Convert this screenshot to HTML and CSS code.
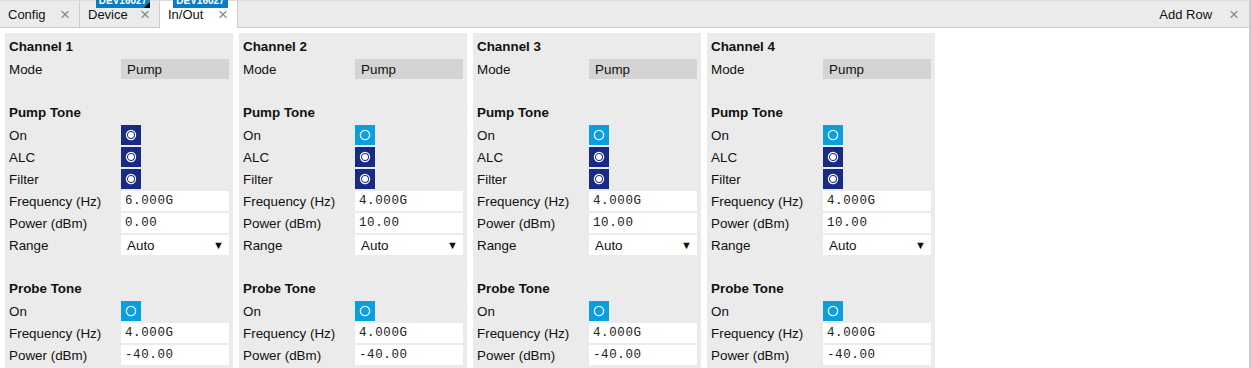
FILE: index.html
```html
<!DOCTYPE html>
<html>
<head>
    <title>In/Out</title>
    <link rel="stylesheet" href="styles.css">
</head>
<body>
    <div class="tabbar">
        <div class="tab">Config <span class="close">&times;</span></div>
        <div class="tab">Device <span class="close">&times;</span><span class="badge flagged">DEV16027</span></div>
        <div class="tab active">In/Out <span class="close">&times;</span><span class="badge">DEV16027</span></div>
        <div class="tab-fill"></div>
        <div class="tab-action">Add Row <span class="close">&times;</span></div>
    </div>

    <div id="channels" class="channels"></div>

    <script>
        const channels = [
            { name: 'Channel 1', pumpOn: true,  alc: true, filter: true, freq: '6.000G', power: '0.00' },
            { name: 'Channel 2', pumpOn: false, alc: true, filter: true, freq: '4.000G', power: '10.00' },
            { name: 'Channel 3', pumpOn: false, alc: true, filter: true, freq: '4.000G', power: '10.00' },
            { name: 'Channel 4', pumpOn: false, alc: true, filter: true, freq: '4.000G', power: '10.00' }
        ];

        const dotOn = '<svg width="12" height="12" viewBox="0 0 12 12"><circle cx="6" cy="6" r="4.6" fill="none" stroke="#fff" stroke-width="1.2"/><circle cx="6" cy="6" r="3" fill="#fff"/></svg>';
        const dotOff = '<svg width="12" height="12" viewBox="0 0 12 12"><circle cx="6" cy="6" r="4.6" fill="none" stroke="#fff" stroke-width="1.3"/></svg>';

        function row(label, value) {
            return `<div class="row"><span class="label">${label}</span>${value}</div>`;
        }

        function toggle(on) {
            return `<span class="toggle ${on ? 'on' : 'off'}">${on ? dotOn : dotOff}</span>`;
        }

        function field(text) {
            return `<span class="field">${text}</span>`;
        }

        const container = document.getElementById('channels');
        channels.forEach(ch => {
            const panel = document.createElement('div');
            panel.className = 'panel';
            panel.innerHTML =
                `<div class="row title">${ch.name}</div>` +
                row('Mode', '<span class="readonly">Pump</span>') +
                '<div class="row"></div>' +
                '<div class="row title">Pump Tone</div>' +
                row('On', toggle(ch.pumpOn)) +
                row('ALC', toggle(ch.alc)) +
                row('Filter', toggle(ch.filter)) +
                row('Frequency (Hz)', field(ch.freq)) +
                row('Power (dBm)', field(ch.power)) +
                row('Range', '<span class="select">Auto<span class="arrow">&#9660;</span></span>') +
                '<div class="row"></div>' +
                '<div class="row title">Probe Tone</div>' +
                row('On', toggle(false)) +
                row('Frequency (Hz)', field('4.000G')) +
                row('Power (dBm)', field('-40.00'));
            container.appendChild(panel);
        });
    </script>
</body>
</html>
```

FILE: styles.css
```css
:root {
    --bar: #ebebeb;
    --border: #cccccc;
    --panel: #ebebeb;
    --readonly: #d4d4d4;
    --navy: #182a84;
    --sky: #0a9fe0;
    --badge: #0a7cc4;
    --text: #111111;
}

* {
    margin: 0;
    padding: 0;
    box-sizing: border-box;
}

html, body {
    height: 100%;
    overflow: hidden;
}

body {
    font-family: "Liberation Sans", Arial, sans-serif;
    font-size: 13px;
    color: var(--text);
    background: #ffffff;
    border-right: 2px solid var(--border);
}

.tabbar {
    display: flex;
    height: 28px;
    background: var(--bar);
    border-top: 1px solid #dddddd;
    border-bottom: 1px solid var(--border);
}

.tab {
    position: relative;
    display: flex;
    align-items: center;
    justify-content: space-between;
    width: 80px;
    padding: 0 9px 0 8px;
    border-right: 1px solid var(--border);
}

.tab.active {
    width: 78px;
    background: #ffffff;
    margin-bottom: -1px;
}

.tab-fill {
    flex: 1;
}

.tab-action {
    display: flex;
    align-items: center;
    gap: 17px;
    padding-right: 10px;
}

.close {
    color: #8a8a8a;
    font-size: 17px;
    font-weight: 300;
    line-height: 1;
}

.badge {
    position: absolute;
    top: -8px;
    left: 16px;
    width: 54px;
    height: 15px;
    line-height: 15px;
    background: var(--badge);
    color: #ffffff;
    font-size: 10px;
    font-weight: bold;
    text-align: center;
}

.tab.active .badge {
    left: 13px;
    width: 55px;
}

.badge.flagged::after {
    content: "";
    position: absolute;
    right: 0;
    bottom: 0;
    border-left: 6px solid transparent;
    border-bottom: 6px solid #000000;
}

.channels {
    display: flex;
    gap: 6px;
    padding: 5px 0 0 5px;
}

.panel {
    width: 228px;
    height: 340px;
    padding: 3px 4px 0;
    background: var(--panel);
    font-size: 13.4px;
}

.row {
    display: grid;
    grid-template-columns: 112px 108px;
    align-items: center;
    height: 22px;
}

.row.title {
    display: block;
    line-height: 22px;
    font-weight: bold;
}

.readonly,
.field,
.select {
    display: flex;
    align-items: center;
    height: 20px;
    padding-left: 6px;
}

.readonly {
    background: var(--readonly);
}

.field {
    padding-left: 4px;
    background: #ffffff;
    font-family: "Liberation Mono", "Courier New", monospace;
    font-size: 12.5px;
    letter-spacing: 0.6px;
    color: #222222;
}

.select {
    justify-content: space-between;
    padding-right: 5px;
    background: #ffffff;
}

.arrow {
    font-size: 11px;
}

.toggle {
    display: flex;
    align-items: center;
    justify-content: center;
    width: 20px;
    height: 20px;
}

.toggle.on {
    background: var(--navy);
}

.toggle.off {
    background: var(--sky);
}
```
